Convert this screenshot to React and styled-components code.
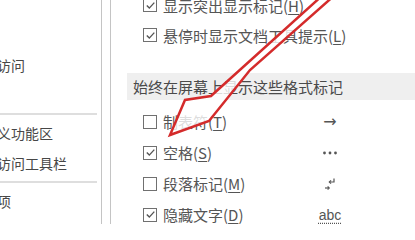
import styled, { createGlobalStyle } from 'styled-components'

const GlobalStyle = createGlobalStyle`
  html, body {
    margin: 0;
    padding: 0;
    background: #fff;
    overflow: hidden;
  }
  body {
    font-family: "Noto Sans CJK SC", "Noto Sans", sans-serif;
  }
`

const navItems = [
  { text: '版式' },
  { text: '语言' },
  { text: '轻松访问' },
  { text: '高级', sepAfter: true },
  { text: '自定义功能区' },
  { text: '快速访问工具栏', sepAfter: true },
  { text: '加载项' },
  { text: '信任中心' },
]

const topOptions = [
  { label: '显示突出显示标记', key: 'H', checked: true },
  { label: '悬停时显示文档工具提示', key: 'L', checked: true },
]

const markOptions = [
  { label: '制表符', key: 'T', checked: false, mark: 'tab' },
  { label: '空格', key: 'S', checked: true, mark: 'space' },
  { label: '段落标记', key: 'M', checked: false, mark: 'para' },
  { label: '隐藏文字', key: 'D', checked: true, mark: 'hidden' },
]

const Mark = ({ kind }) => {
  if (kind === 'tab') return <ArrowGlyph>→</ArrowGlyph>
  if (kind === 'space') {
    return (
      <svg width="16" height="6" viewBox="0 0 16 6">
        <circle cx="2.5" cy="3" r="1.4" fill="#555" />
        <circle cx="8" cy="3" r="1.4" fill="#555" />
        <circle cx="13.5" cy="3" r="1.4" fill="#555" />
      </svg>
    )
  }
  if (kind === 'para') {
    return (
      <svg width="12" height="14" viewBox="0 0 12 14" fill="none" stroke="#555" strokeWidth="1.2">
        <path d="M10 1.5v3.5H5.5" />
        <path d="M7 3.3L5.3 5l1.7 1.7" />
        <path d="M1 11h4" />
        <path d="M3.6 9.5L5.2 11l-1.6 1.5" />
      </svg>
    )
  }
  return <HiddenGlyph>abc</HiddenGlyph>
}

const CheckBox = ({ checked }) => (
  <Box>
    {checked && (
      <svg width="11" height="11" viewBox="0 0 11 11" fill="none" stroke="#555" strokeWidth="1.4">
        <polyline points="1.8,5.6 4.3,8.1 9.3,2.6" />
      </svg>
    )}
  </Box>
)

const OptionLabel = ({ label, hotkey }) => (
  <Label>
    {label}(<u>{hotkey}</u>)
  </Label>
)

export default function App() {
  return (
    <>
      <GlobalStyle />
      <Window>
        <Nav>
          <NavList>
            {navItems.map((item) => (
              <li key={item.text}>
                <NavItem>{item.text}</NavItem>
                {item.sepAfter && <NavSeparator />}
              </li>
            ))}
          </NavList>
        </Nav>
        <Panel>
          <OptionGroup>
            {topOptions.map((o) => (
              <Row key={o.key}>
                <CheckBox checked={o.checked} />
                <OptionLabel label={o.label} hotkey={o.key} />
              </Row>
            ))}
          </OptionGroup>
          <SectionTitle>始终在屏幕上显示这些格式标记</SectionTitle>
          <MarkGroup>
            {markOptions.map((o) => (
              <Row key={o.key} $tall>
                <CheckBox checked={o.checked} />
                <OptionLabel label={o.label} hotkey={o.key} />
                <MarkCell>
                  <Mark kind={o.mark} />
                </MarkCell>
              </Row>
            ))}
          </MarkGroup>
        </Panel>
        <Annotation viewBox="0 0 415 224" width="415" height="224">
          <polygon
            points="324,-6 211,96 185,100 170,135 209,121 250,70 336,-6"
            fill="rgba(255,255,255,0.8)"
            stroke="#d42b2b"
            strokeWidth="2.5"
            strokeLinejoin="miter"
          />
        </Annotation>
      </Window>
    </>
  )
}

const Window = styled.div`
  position: relative;
  width: 415px;
  height: 224px;
  display: flex;
  gap: 8px;
  overflow: hidden;
  background: #fff;
  color: #4a4a4a;
`

const Nav = styled.nav`
  width: 101px;
  flex: 0 0 101px;
  border-right: 1px solid #c4c4c4;
  overflow: hidden;
`

const NavList = styled.ul`
  list-style: none;
  margin: -10px 0 0;
  padding: 0;
`

const NavItem = styled.div`
  height: 30px;
  line-height: 30px;
  margin-left: -31px;
  font-size: 14px;
  white-space: nowrap;
  color: #474747;
`

const NavSeparator = styled.div`
  height: 8px;
  position: relative;
  &::after {
    content: '';
    position: absolute;
    left: 0;
    top: 3px;
    width: 97px;
    height: 2px;
    background: #dedede;
  }
`

const Panel = styled.section`
  flex: 1;
  border-left: 1px solid #c4c4c4;
  overflow: hidden;
`

const OptionGroup = styled.div`
  margin-top: -10px;
  padding-left: 32px;
`

const MarkGroup = styled.div`
  margin-top: 6px;
  padding-left: 32px;
`

const Row = styled.div`
  display: flex;
  align-items: center;
  height: ${(p) => (p.$tall ? '31px' : '30px')};
`

const Box = styled.span`
  box-sizing: border-box;
  width: 14px;
  height: 14px;
  flex: 0 0 14px;
  border: 1.5px solid #707070;
  background: #fff;
  display: flex;
  align-items: center;
  justify-content: center;
`

const Label = styled.span`
  flex: 0 0 152px;
  margin-left: 6px;
  font-size: 15px;
  white-space: nowrap;
  color: #555;
  u {
    text-underline-offset: 2px;
  }
`

const SectionTitle = styled.h3`
  margin: 23px 0 0 16px;
  height: 27px;
  line-height: 27px;
  padding-left: 6px;
  background: #efefef;
  font-size: 15px;
  font-weight: normal;
  color: #4a4a4a;
  white-space: nowrap;
`

const MarkCell = styled.span`
  width: 30px;
  display: flex;
  justify-content: center;
  align-items: center;
  color: #555;
`

const ArrowGlyph = styled.span`
  font-family: "DejaVu Sans", sans-serif;
  font-size: 16px;
`

const HiddenGlyph = styled.span`
  font-family: "Liberation Sans", sans-serif;
  font-size: 14px;
  text-decoration: underline dotted;
  text-underline-offset: 3px;
`

const Annotation = styled.svg`
  position: absolute;
  left: 0;
  top: 0;
  pointer-events: none;
`
